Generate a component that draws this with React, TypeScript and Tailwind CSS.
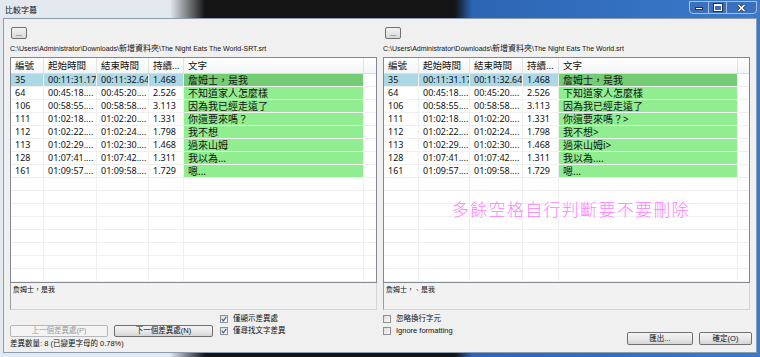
const headers = ["編號", "起始時間", "結束時間", "持續...", "文字"];

const leftCols = ["w-[33px]", "w-[53px]", "w-[52px]", "w-[35px]", "w-[180px]"];
const rightCols = ["w-[35px]", "w-[51px]", "w-[53px]", "w-[36px]", "w-[179px]"];

const times = [
  ["35", "00:11:31.17", "00:11:32.64", "1.468"],
  ["64", "00:45:18....", "00:45:20....", "2.526"],
  ["106", "00:58:55....", "00:58:58....", "3.113"],
  ["111", "01:02:18....", "01:02:20....", "1.331"],
  ["112", "01:02:22....", "01:02:24....", "1.798"],
  ["113", "01:02:29....", "01:02:30....", "1.468"],
  ["128", "01:07:41....", "01:07:42....", "1.311"],
  ["161", "01:09:57....", "01:09:58....", "1.729"],
];

const leftText = ["詹姆士，是我", "不知道家人怎麼樣", "因為我已經走遠了", "你還要來嗎？", "我不想", "過來山姆", "我以為...", "嗯..."];
const rightText = ["詹姆士，是我", "下知道家人怎麼樣", "因為我已經走遠了", "你還要來嗎？>", "我不想>", "過來山姆i>", "我以為....", "嗯..."];

function ListView({ cols, texts }: { cols: string[]; texts: string[] }) {
  return (
    <div className="h-[226px] border border-[#828790] bg-white flex flex-col overflow-hidden font-['Noto_Sans','Noto_Sans_CJK_TC',sans-serif] text-[#111]">
      <div className="flex h-[16px] shrink-0 border-b border-[#dcdcdc] bg-gradient-to-b from-white to-[#f4f5f6] text-[9.5px] leading-[15px]">
        {headers.map((h, i) => (
          <div key={h} className={`${cols[i]} shrink-0 border-r border-[#e3e3e3] pl-[4px] whitespace-nowrap overflow-hidden`}>
            {h}
          </div>
        ))}
        <div className="flex-1" />
      </div>
      {Array.from({ length: 16 }).map((_, r) => {
        const row = times[r];
        const sel = r === 0;
        return (
          <div key={r} className="flex h-[13px] shrink-0 border-b border-[#f0f0f0] leading-[12px]">
            {[0, 1, 2, 3].map((c) => (
              <div
                key={c}
                className={`${cols[c]} shrink-0 border-r border-[#f0f0f0] pl-[4px] text-[9px] whitespace-nowrap overflow-hidden ${sel ? "bg-[#acd8e6]" : ""}`}
              >
                {row ? row[c] : ""}
              </div>
            ))}
            <div
              className={`${cols[4]} shrink-0 border-r border-[#f0f0f0] pl-[4px] text-[10px] whitespace-nowrap overflow-hidden ${
                row ? (sel ? "bg-[#74cd74]" : "bg-[#90ee90]") : ""
              }`}
            >
              {row ? texts[r] : ""}
            </div>
            <div className="flex-1" />
          </div>
        );
      })}
    </div>
  );
}

function Check({ label, checked }: { label: string; checked?: boolean }) {
  return (
    <div className="flex items-center h-[12px] gap-[5px]">
      <span className="w-[8px] h-[8px] border border-[#8e8f8f] bg-gradient-to-br from-[#dcdcdc] to-[#fafafa] flex items-center justify-center">
        {checked && (
          <svg width="6" height="6" viewBox="0 0 6 6">
            <path d="M0.8 3 L2.4 4.8 L5.3 0.9" fill="none" stroke="#3c62a8" strokeWidth="1.2" />
          </svg>
        )}
      </span>
      <span className="text-[7.5px] leading-none text-[#111]">{label}</span>
    </div>
  );
}

function Btn({ label, w, disabled }: { label: string; w: string; disabled?: boolean }) {
  return (
    <div
      className={`${w} h-[12px] rounded-[2px] border flex items-center justify-center text-[7.5px] leading-none ${
        disabled
          ? "border-[#b5b8ba] bg-[#f4f4f4] text-[#9a9a9a]"
          : "border-[#707070] bg-gradient-to-b from-[#f3f3f3] via-[#e9e9e9] to-[#d5d5d5] text-[#111]"
      }`}
    >
      {label}
    </div>
  );
}

function PathLine({ cjk, tail }: { cjk: string; tail: string }) {
  return (
    <div className="mt-[4px] h-[12px] leading-[12px] whitespace-nowrap text-[7px] text-[#111]">
      C:\Users\Administrator\Downloads\<span className="text-[8px]">{cjk}</span>\{tail}
    </div>
  );
}

export default function App() {
  return (
    <div className="relative w-[760px] h-[357px] overflow-hidden bg-[linear-gradient(to_right,#e4e9ef_0px,#e4e9ef_170px,#141414_205px,#141414_455px,#2c65b4_472px,#3b7acb_760px)] font-['Liberation_Sans','Noto_Sans_CJK_TC',sans-serif]">
      {/* title bar */}
      <div className="h-[18px] flex justify-between">
        <div className="pl-[5px] pt-[5px] text-[8px] leading-[12px] text-[#111]">比較字幕</div>
        <div className="mr-[3px] mt-[1px] h-[13px] flex border border-[#a9c0de] rounded-b-[4px] overflow-hidden bg-[#3a70bd]">
          <div className="w-[19px] flex items-end justify-center pb-[3px] border-r border-[#a9c0de]">
            <span className="w-[8px] h-[3px] bg-white border border-[#333]" />
          </div>
          <div className="w-[18px] flex items-center justify-center border-r border-[#a9c0de]">
            <span className="w-[8px] h-[7px] border border-white border-t-[2px] outline outline-1 outline-[#333]" />
          </div>
          <div className="w-[29px] flex items-center justify-center text-white text-[9px] font-bold leading-none">
            <svg width="9" height="8" viewBox="0 0 9 8">
              <path d="M1.5 1 L7.5 7 M7.5 1 L1.5 7" stroke="#333" strokeWidth="3" />
              <path d="M1.5 1 L7.5 7 M7.5 1 L1.5 7" stroke="#fff" strokeWidth="1.6" />
            </svg>
          </div>
        </div>
      </div>

      {/* client area */}
      <div className="mx-[3px] h-[335px] border border-[#8c9db3] bg-[#f0f0f0] px-[6px] pt-[8px] flex gap-[6px]">
        {/* left panel */}
        <div className="w-[367px] flex flex-col">
          <div className="ml-[1px] w-[16px] h-[12px] rounded-[2px] border border-[#707070] bg-gradient-to-b from-[#f3f3f3] to-[#d8d8d8] flex items-end justify-center text-[7px] leading-[9px]">
            ...
          </div>
          <PathLine cjk="新增資料夾" tail="The Night Eats The World-SRT.srt" />
          <div className="mt-[2px]">
            <ListView cols={leftCols} texts={leftText} />
          </div>
          <div className="h-[27px] border border-t-0 border-[#9a9ea3] border-r-[#d5d5d5] border-b-[#d5d5d5] bg-[#f2f2f2] pl-[2px] pt-[2px] text-[7px] leading-[10px] text-[#111]">
            詹姆士，是我
          </div>
          <div className="pt-[3px] flex items-end">
            <Btn label="上一個差異處(P)" w="w-[98px]" disabled />
            <div className="ml-[6px]">
              <Btn label="下一個差異處(N)" w="w-[99px]" />
            </div>
            <div className="ml-[7px] flex flex-col">
              <Check label="僅顯示差異處" checked />
              <Check label="僅尋找文字差異" checked />
            </div>
          </div>
          <div className="mt-[1px] h-[12px] leading-[12px] text-[7.5px] text-[#111]">差異數量: 8 (已變更字母的 0.78%)</div>
        </div>

        {/* right panel */}
        <div className="w-[367px] flex flex-col">
          <div className="ml-[2px] w-[16px] h-[12px] rounded-[2px] border border-[#707070] bg-gradient-to-b from-[#f3f3f3] to-[#d8d8d8] flex items-end justify-center text-[7px] leading-[9px]">
            ...
          </div>
          <PathLine cjk="新增資料夾" tail="The Night Eats The World.srt" />
          <div className="mt-[2px]">
            <ListView cols={rightCols} texts={rightText} />
          </div>
          <div className="h-[27px] border border-t-0 border-[#9a9ea3] border-r-[#d5d5d5] border-b-[#d5d5d5] bg-[#f2f2f2] pl-[2px] pt-[2px] text-[7px] leading-[10px] text-[#111]">
            詹姆士，<span className="text-[#e01010]">、</span>是我
          </div>
          <div className="pt-[3px] flex justify-between items-start">
            <div className="flex flex-col">
              <Check label="忽略換行字元" />
              <Check label="Ignore formatting" />
            </div>
            <div className="mt-[19px] -mr-[2px] flex gap-[6px]">
              <div className="w-[66px] h-[13px] rounded-[2px] border border-[#707070] bg-gradient-to-b from-[#f3f3f3] via-[#e9e9e9] to-[#d5d5d5] flex items-center justify-center text-[7.5px] leading-none text-[#111]">
                匯出...
              </div>
              <div className="w-[53px] h-[13px] rounded-[2px] border border-[#707070] bg-gradient-to-b from-[#f3f3f3] via-[#e9e9e9] to-[#d5d5d5] flex items-center justify-center text-[7.5px] leading-none text-[#111]">
                確定(O)
              </div>
            </div>
          </div>
        </div>
      </div>

      {/* annotation drawn over the right list */}
      <div className="absolute left-[452px] top-[199px] text-[17px] leading-[20px] tracking-[1.3px] text-[#ff80ff] font-light font-['Noto_Sans_CJK_TC',sans-serif]">
        多餘空格自行判斷要不要刪除
      </div>
    </div>
  );
}
